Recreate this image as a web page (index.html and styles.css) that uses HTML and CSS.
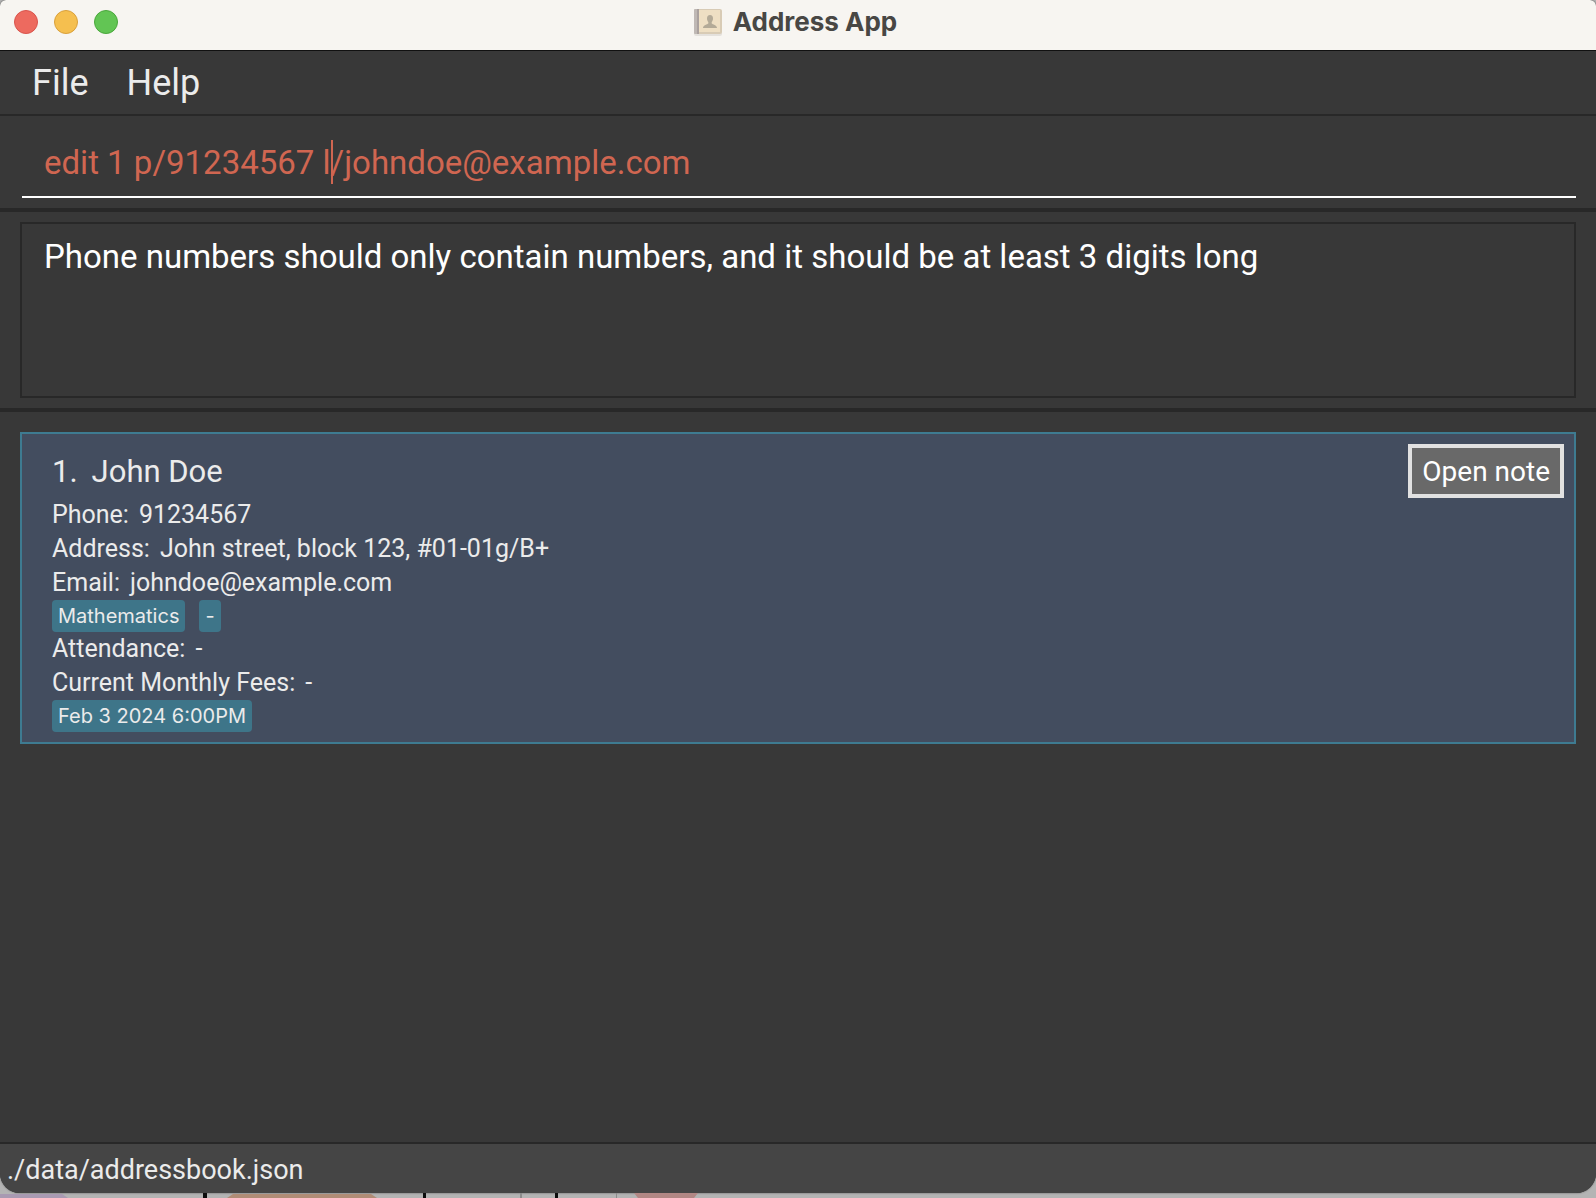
FILE: index.html
```html
<!DOCTYPE html>
<html lang="en">
<head>
<meta charset="utf-8">
<meta name="viewport" content="width=device-width, initial-scale=1">
<title>Address App</title>
<link rel="stylesheet" href="styles.css">
</head>
<body>
<div class="window">
  <header class="titlebar">
    <div class="lights">
      <button class="light close" aria-label="Close"></button>
      <button class="light minimise" aria-label="Minimise"></button>
      <button class="light expand" aria-label="Zoom"></button>
    </div>
    <h1 class="title">
      <svg class="book" width="30" height="28" viewBox="0 0 30 28" aria-hidden="true">
        <rect x="1" y="2" width="28" height="26" rx="2" fill="#e4e1dc"/>
        <rect x="1" y="1" width="28" height="25" rx="2" fill="#d8cbb5"/>
        <rect x="6" y="2" width="21" height="22" fill="#eedfc3"/>
        <path d="M2 1h3v25H2a1 1 0 0 1-1-1V2a1 1 0 0 1 1-1z" fill="#bfb8b4"/>
        <path d="M4 1h2v25H4z" fill="#aaa19e"/>
        <path d="M17 7c2 0 3 1.500 3 3.500 0 1.700-.7 2.800-1.300 3.500v1.500c.8 1 5.300 1.500 5.300 4.500H10c0-3 4.500-3.500 5.300-4.500V14c-.6-.7-1.300-1.800-1.300-3.500C14 8.500 15 7 17 7z" fill="#b3aa97"/>
      </svg>
      Address App
    </h1>
  </header>
  <nav class="menubar">
    <button class="menu">File</button>
    <button class="menu">Help</button>
  </nav>
  <main class="content">
    <form class="command">
      <input class="command-input" type="text" aria-label="Command" spellcheck="false" value="edit 1 p/91234567 l/johndoe@example.com">
      <span class="caret-track" aria-hidden="true"><span class="caret-lead">edit 1 p/91234567 l</span></span>
    </form>
    <section class="result-pane">
      <output class="result">Phone numbers should only contain numbers, and it should be at least 3 digits long</output>
    </section>
    <section class="list">
      <article class="card">
        <div class="details">
          <h2 class="name"><span>1.</span><span>John Doe</span></h2>
          <p class="row"><span>Phone:</span><span>91234567</span></p>
          <p class="row"><span>Address:</span><span>John street, block 123, #01-01g/B+</span></p>
          <p class="row"><span>Email:</span><span>johndoe@example.com</span></p>
          <div class="tags"><span class="tag">Mathematics</span><span class="tag">-</span></div>
          <p class="row"><span>Attendance:</span><span>-</span></p>
          <p class="row"><span>Current Monthly Fees:</span><span>-</span></p>
          <div class="tags"><span class="tag">Feb 3 2024 6:00PM</span></div>
        </div>
        <button class="note">Open note</button>
      </article>
    </section>
  </main>
  <footer class="status">./data/addressbook.json</footer>
</div>
<div class="desktop" aria-hidden="true">
  <svg width="800" height="5" viewBox="0 0 800 5">
    <path d="M0 1h62l6 4H0z" fill="#a99ab2"/>
    <path d="M203 0h4v5h-4zM423 0h3v5h-3zM555 0h3v5h-3z" fill="#0c0c0c"/>
    <path d="M233 1h138l6 4H227z" fill="#b08c76"/>
    <path d="M520 0h2v5h-2zM616 0h1v5h-1z" fill="#8c8c8c"/>
    <path d="M634 0h64l-4 5h-56z" fill="#b28784"/>
  </svg>
</div>
</body>
</html>
```

FILE: styles.css
```css
* {
  box-sizing: border-box;
}

body {
  display: flex;
  flex-direction: column;
  min-height: 100vh;
  margin: 0;
  background: #b4b4b4;
  color: #ebebeb;
  font-family: Roboto, "Liberation Sans", sans-serif;
}

button {
  margin: 0;
  border: 0;
  font: inherit;
  color: inherit;
}

.window {
  flex: 1;
  display: flex;
  flex-direction: column;
  overflow: hidden;
  border-radius: 6px 6px 20px 20px;
  background: #383838;
  box-shadow: 0 0 2px #555;
}

.titlebar {
  display: grid;
  grid-template-columns: 1fr auto 1fr;
  align-items: center;
  height: 51px;
  padding: 0 20px 7px 14px;
  border-bottom: 1px solid #111;
  background: #f7f5f1;
}

.lights {
  display: flex;
  gap: 16px;
}

.light {
  width: 24px;
  height: 24px;
  padding: 0;
  border: 1px solid;
  border-radius: 50%;
}

.close {
  border-color: #d9544d;
  background: #ed6a5f;
}

.minimise {
  border-color: #d9a03c;
  background: #f5bf4f;
}

.expand {
  border-color: #4aa73c;
  background: #62c554;
}

.title {
  display: flex;
  align-items: center;
  gap: 10px;
  margin: 0;
  color: #484744;
  font-family: Inter, "Liberation Sans", sans-serif;
  font-size: 26px;
  font-weight: 700;
  line-height: 32px;
}

.menubar {
  display: flex;
  gap: 38px;
  padding: 10px 32px 9px;
  border-bottom: 2px solid #282828;
}

.menu {
  padding: 0;
  background: none;
  font-size: 36px;
  line-height: 44px;
}

.content {
  flex: 1;
}

.command {
  position: relative;
  padding: 20px 20px 10px 22px;
  border-bottom: 4px solid #282828;
}

.command-input,
.caret-track {
  padding: 0 22px;
  font: 33px/50px Roboto, "Liberation Sans", sans-serif;
}

.command-input {
  display: block;
  width: 100%;
  height: 62px;
  padding-bottom: 8px;
  border: 0;
  border-bottom: 2px solid #fff;
  outline: 0;
  background: none;
  color: #d06651;
}

.caret-track {
  position: absolute;
  top: 24px;
  left: 22px;
  color: transparent;
  line-height: 44px;
  pointer-events: none;
}

.caret-lead {
  display: block;
  border-right: 2px solid #d06651;
}

.result-pane {
  padding: 10px 20px;
  border-bottom: 4px solid #282828;
}

.result {
  display: block;
  min-height: 176px;
  padding: 11px 22px;
  border: 2px solid #282828;
  color: #fff;
  font-size: 33px;
  line-height: 44px;
}

.list {
  padding: 20px;
}

.card {
  display: flex;
  justify-content: space-between;
  align-items: flex-start;
  padding: 10px;
  border: 2px solid #3e7b91;
  background: #434d5f;
}

.details {
  padding-left: 20px;
}

.name {
  display: flex;
  gap: 14px;
  margin: 6px 0 4px;
  font-size: 31px;
  font-weight: 400;
  line-height: 44px;
}

.row {
  display: flex;
  gap: 10px;
  margin: 0;
  font-size: 25px;
  line-height: 34px;
}

.tags {
  display: flex;
  gap: 14px;
}

.tag {
  padding: 0 6px;
  border-radius: 4px;
  background: #3e7589;
  font-family: Inter, "Liberation Sans", sans-serif;
  font-size: 20px;
  line-height: 32px;
}

.note {
  padding: 1px 10px 0;
  border: 4px solid #e1e1e1;
  background: #696969;
  color: #fff;
  font-size: 28px;
  line-height: 45px;
}

.status {
  padding: 6px 7px 3px;
  border-top: 2px solid #282828;
  background: #454545;
  font-size: 27px;
  line-height: 40px;
}

.desktop {
  height: 5px;
}

.desktop svg {
  display: block;
}
```
